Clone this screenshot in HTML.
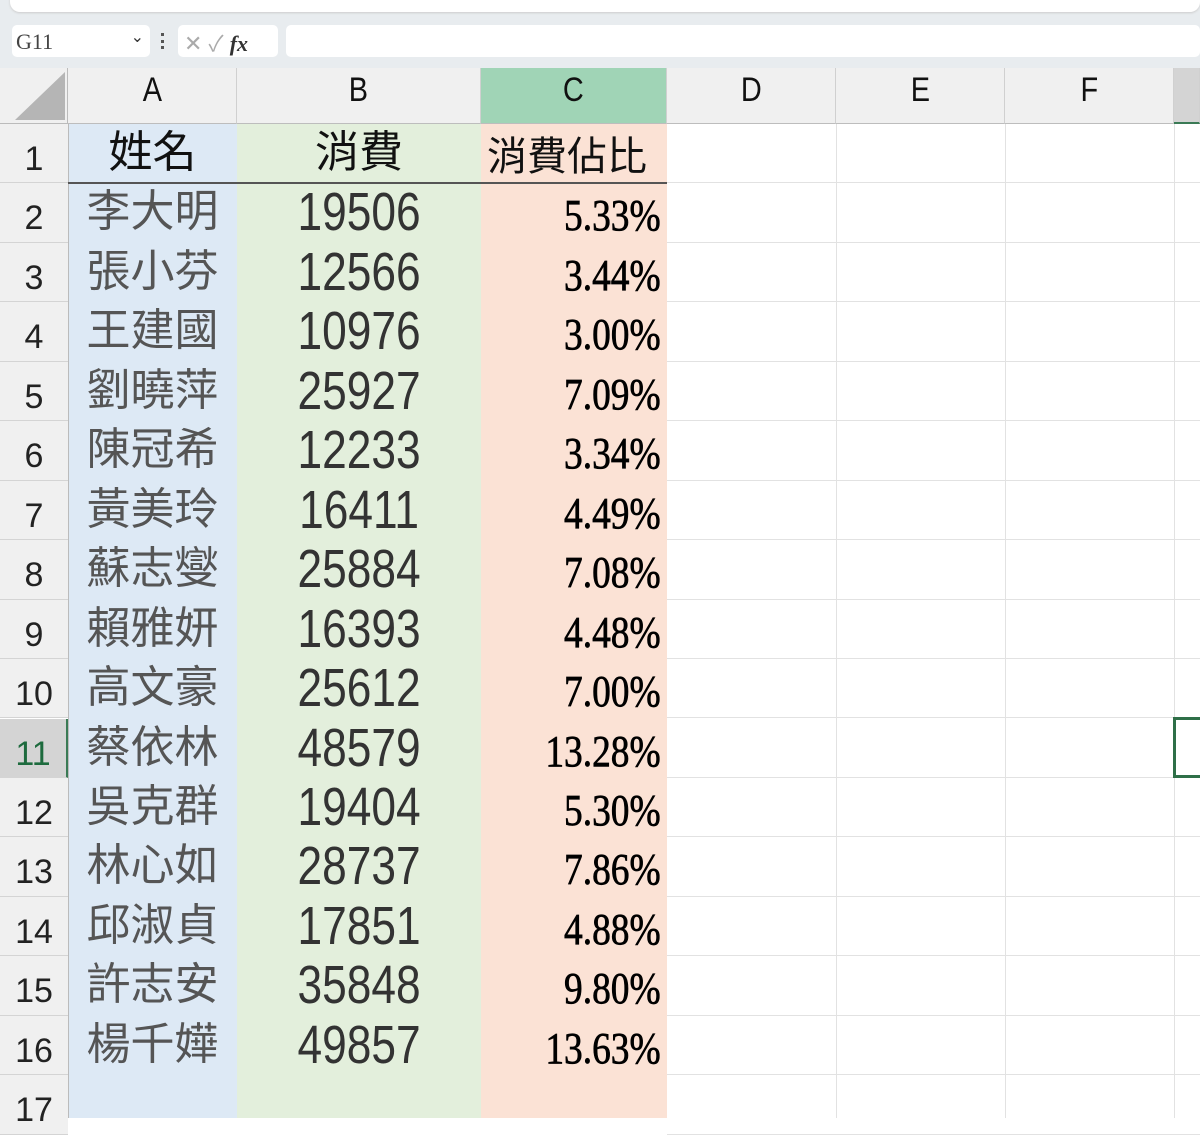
<!DOCTYPE html>
<html><head><meta charset="utf-8"><style>
*{margin:0;padding:0;box-sizing:border-box}
body{width:1200px;height:1118px;overflow:hidden;background:#fff;position:relative;font-family:"Liberation Sans","Noto Sans CJK TC",sans-serif}
.abs{position:absolute}
.rn{position:absolute;left:0;width:68px;text-align:center;font-size:34px;color:#222;background:#f0f0f0;border-bottom:1px solid #d4d4d4}
.cell{position:absolute;border-bottom:1px solid #e2e2e2}
.nm{font-size:44px;color:#555;text-align:center;line-height:58px;white-space:nowrap}
.num{font-size:54px;color:#333;text-align:center;line-height:58px}
.num span{display:inline-block;transform:scaleX(.82)}
.pc{font-family:"Liberation Serif",serif;font-size:44px;color:#000;text-align:right;padding-right:6px;line-height:66px;-webkit-text-stroke:0.7px #000}
.pc span{display:inline-block;transform:scaleX(.85);transform-origin:right}
.ch{position:absolute;top:68px;height:56px;background:#f0f0f0;border-right:1px solid #d0d0d0;border-bottom:1px solid #bdbdbd;text-align:center;font-size:34px;line-height:44px;color:#111}
.ch span{display:inline-block;transform:scaleX(.85)}
.vl{position:absolute;top:124px;bottom:0;width:1px;background:#e2e2e2}
</style></head><body>
<div class="abs" style="left:0;top:0;width:1200px;height:68px;background:#e8ecef"></div>
<div class="abs" style="left:10px;top:-10px;width:1190px;height:22px;background:#fff;border-radius:10px;box-shadow:0 1px 2px #ccc"></div>
<div class="abs" style="left:12px;top:25px;width:138px;height:32px;background:#fff;border-radius:5px;font-family:'Liberation Serif',serif;font-size:22px;color:#444;padding:4px 4px">G11<span style="position:absolute;right:6px;top:2px;font-size:16px;color:#333">&#8964;</span></div>
<div class="abs" style="left:161px;top:33px;width:3px;height:16px;border-left:3px dotted #555"></div>
<div class="abs" style="left:178px;top:25px;width:100px;height:32px;background:#fff;border-radius:5px;color:#aaa;font-size:22px;padding:1px 6px">✕ ✓ <i style="font-family:'Liberation Serif',serif;color:#333;font-weight:bold">fx</i></div>
<div class="abs" style="left:286px;top:25px;width:914px;height:32px;background:#fff;border-radius:5px"></div>

<div class="abs" style="left:0;top:68px;width:68px;height:56px;background:#f0f0f0;border-right:1px solid #bbb;border-bottom:1px solid #bbb"></div>
<svg class="abs" style="left:15px;top:72px" width="52" height="50"><polygon points="50,0 50,48 0,48" fill="#b5b5b5"/></svg>
<div class="ch" style="left:68px;width:169px"><span>A</span></div>
<div class="ch" style="left:237px;width:244px"><span>B</span></div>
<div class="ch" style="left:481px;width:186px;background:#a0d4b6"><span>C</span></div>
<div class="ch" style="left:667px;width:169px"><span>D</span></div>
<div class="ch" style="left:836px;width:169px"><span>E</span></div>
<div class="ch" style="left:1005px;width:169px"><span>F</span></div>
<div class="ch" style="left:1174px;width:26px;background:#d4d4d4;border-bottom:2px solid #3a7a55"></div>

<div class="abs" style="left:68px;top:124px;width:169px;height:994px;background:#dde9f5"></div>
<div class="abs" style="left:237px;top:124px;width:244px;height:994px;background:#e3efdc"></div>
<div class="abs" style="left:481px;top:124px;width:186px;height:994px;background:#fbe2d5"></div>
<div class="abs" style="left:68px;top:124px;width:1px;height:994px;background:#bbb"></div>
<div class="vl" style="left:836px"></div><div class="vl" style="left:1005px"></div><div class="vl" style="left:1174px"></div>
<div id="g"></div>
<script>
var d=[["姓名","消費","消費佔比"],["李大明","19506","5.33%"],["張小芬","12566","3.44%"],["王建國","10976","3.00%"],["劉曉萍","25927","7.09%"],["陳冠希","12233","3.34%"],["黃美玲","16411","4.49%"],["蘇志燮","25884","7.08%"],["賴雅妍","16393","4.48%"],["高文豪","25612","7.00%"],["蔡依林","48579","13.28%"],["吳克群","19404","5.30%"],["林心如","28737","7.86%"],["邱淑貞","17851","4.88%"],["許志安","35848","9.80%"],["楊千嬅","49857","13.63%"],["","",""]];
var h="";
for(var i=0;i<17;i++){var t=124+i*59.45,hh=59.45;
var sel=i==10;
h+='<div class="rn" style="top:'+t+'px;height:'+hh+'px;line-height:'+(hh+12)+'px;'+(sel?'background:#d4d4d4;color:#1e6b3e;border-right:2px solid #3a7a55;':'')+'">'+(i+1)+'</div>';
h+='<div class="cell" style="left:667px;top:'+t+'px;width:533px;height:'+hh+'px"></div>';
if(i==0){
h+='<div class="abs nm" style="left:68px;top:'+t+'px;width:169px;color:#111">姓名</div>';
h+='<div class="abs nm" style="left:237px;top:'+t+'px;width:244px;color:#111">消費</div>';
h+='<div class="abs nm" style="left:481px;top:'+(t+4)+'px;width:186px;color:#111;font-size:40px;text-align:left;padding-left:6px">消費佔比</div>';
h+='<div class="abs" style="left:68px;top:'+(t+58)+'px;width:599px;height:2px;background:#555"></div>';
}else{
h+='<div class="abs nm" style="left:68px;top:'+t+'px;width:169px">'+d[i][0]+'</div>';
h+='<div class="abs num" style="left:237px;top:'+t+'px;width:244px"><span>'+d[i][1]+'</span></div>';
h+='<div class="abs pc" style="left:481px;top:'+t+'px;width:186px"><span>'+d[i][2]+'</span></div>';}
}
h+='<div class="abs" style="left:1173px;top:717px;width:30px;height:61px;border:3px solid #2f6f48"></div>';
document.getElementById('g').innerHTML=h;
</script>
</body></html>
